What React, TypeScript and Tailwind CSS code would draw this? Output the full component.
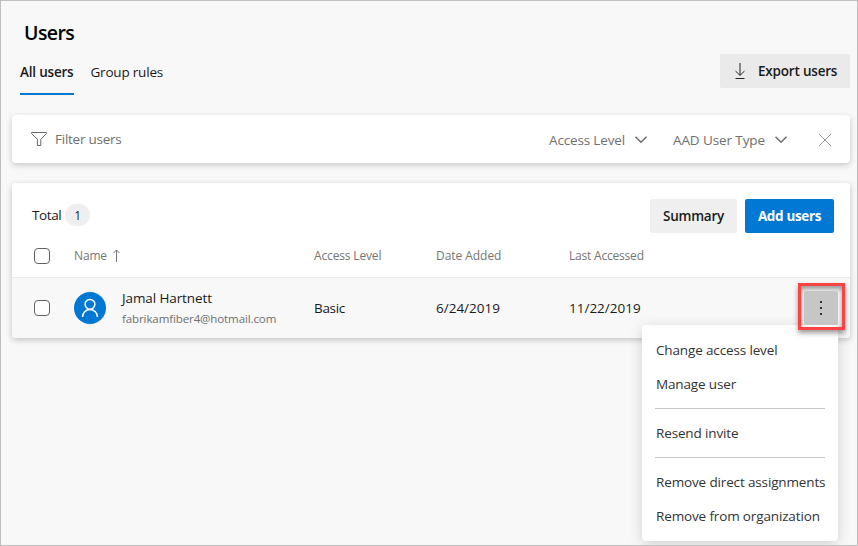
import type { ReactNode } from "react";

function Checkbox() {
  return <span className="block size-4 rounded-[4px] border border-[#616161] bg-white" />;
}

function Chevron() {
  return (
    <svg className="h-4 w-4" viewBox="0 0 16 16" fill="none" stroke="#6b6b6b" strokeWidth="1.5">
      <path d="M2.5 5.8 8 11.2l5.5-5.4" />
    </svg>
  );
}

function MenuItem({ children }: { children: ReactNode }) {
  return <div className="flex h-[34px] items-center pl-[14px] tracking-[-0.14px] text-[#333]">{children}</div>;
}

function Divider() {
  return <div className="mx-[13px] my-[7px] h-px bg-[#c8c8c8]" />;
}

export default function App() {
  return (
    <div className="relative h-[546px] w-[858px] overflow-hidden border border-[#bebebe] bg-[#f8f8f8] font-['Open_Sans','Noto_Sans',sans-serif] text-[13.5px] leading-5 whitespace-nowrap text-[#1a1a1a]">
      <div className="flex h-[53px] items-center pt-[10px] pl-[23px]">
        <h1 className="text-[19.5px] font-semibold tracking-[-0.6px] text-black">Users</h1>
      </div>
      <div className="flex h-[61px] justify-between pr-[7px] pl-[19px]">
        <div className="flex gap-[17px]">
          <div className="h-[41px] w-[54px] border-b-2 border-[#0078d4] pt-[8px] font-semibold tracking-[-0.2px]">All users</div>
          <div className="-ml-[0.5px] pt-[8px] tracking-[-0.2px]">Group rules</div>
        </div>
        <button className="flex h-[34px] w-[130px] items-center rounded-[2px] bg-[#eaeaea] pl-[13px] font-semibold">
          <svg className="mr-[11px] h-[16px] w-[14px]" viewBox="0 0 14 16" fill="none" stroke="#222">
            <path d="M7 0v12M2.5 8 7 12.4 11.5 8M2.5 15.5h9" />
          </svg>
          <span className="tracking-[-0.2px]">Export users</span>
        </button>
      </div>

      <div className="mr-[7px] ml-[11px] flex h-12 items-center rounded-[4px] bg-white pr-[17px] pl-[18px] text-[#6f6f6f] shadow-[0_2px_6px_rgba(0,0,0,0.2)]">
        <svg className="mr-[7px] h-[16px] w-[18px]" viewBox="0 0 18 16" fill="none" stroke="#666">
          <path d="M1.5 1.5h15v1l-5.7 5.8v6.2H7.4V8.3L1.5 2.5z" />
        </svg>
        <span className="flex-1 tracking-[-0.25px]">Filter users</span>
        <span className="w-[84px] pt-px tracking-[-0.15px]">Access Level</span>
        <Chevron />
        <span className="ml-[24px] w-[100px] pt-px tracking-[-0.1px]">AAD User Type</span>
        <Chevron />
        <svg className="mt-px ml-[28px] h-4 w-4" viewBox="0 0 16 16" stroke="#999">
          <path d="m2 2 12 12M14 2 2 14" />
        </svg>
      </div>

      <div className="mt-5 mr-[7px] ml-[11px] h-[155px] rounded-[4px] bg-white shadow-[0_2px_6px_rgba(0,0,0,0.22)]">
        <div className="flex h-[52px] items-center pt-[12px] pr-4 pl-5">
          <span className="mr-[4px] tracking-[-0.4px]">Total</span>
          <span className="flex h-[22px] w-[25px] items-center justify-center rounded-full bg-[#efefef] pt-px text-[12px]">1</span>
          <button className="mt-[2px] ml-auto h-[34px] w-[87px] rounded-[2px] bg-[#efefef] font-semibold tracking-[-0.25px]">Summary</button>
          <button className="mt-[2px] ml-2 h-[34px] w-[89px] rounded-[2px] bg-[#0078d4] font-bold tracking-[-0.35px] text-white">Add users</button>
        </div>
        <div className="flex h-[43px] items-center border-b border-[#e8e8e8] pl-[22px] text-[12px] tracking-[-0.15px] text-[#757575]">
          <div className="w-10"><Checkbox /></div>
          <div className="flex w-[240px] items-center">
            <span className="w-[37px]">Name</span>
            <svg className="-mt-[2px] h-[13px] w-[11px]" viewBox="0 0 11 13" fill="none" stroke="#757575">
              <path d="M5.5 13V1M2.5 4 5.5 1l3 3" />
            </svg>
          </div>
          <div className="w-[122px]">Access Level</div>
          <div className="w-[133px] tracking-[-0.05px]">Date Added</div>
          <div className="tracking-[-0.2px]">Last Accessed</div>
        </div>
        <div className="flex h-[60px] items-center rounded-b-[4px] bg-[#f8f8f8] pl-[22px]">
          <div className="w-10"><Checkbox /></div>
          <div className="flex w-[240px] items-center">
            <svg className="mr-4 size-8" viewBox="0 0 32 32" fill="none" stroke="white" strokeWidth="1.5">
              <circle cx="16" cy="16" r="16" fill="#0078d4" stroke="none" />
              <circle cx="16" cy="12.3" r="4.9" />
              <path d="M8.5 25a7.5 7.5 0 0 1 15 0" />
            </svg>
            <div>
              <div className="tracking-[-0.1px]">Jamal Hartnett</div>
              <div className="pt-px text-[11.5px] tracking-[-0.1px] text-[#6f6f6f]">fabrikamfiber4@hotmail.com</div>
            </div>
          </div>
          <div className="w-[122px] tracking-[-0.3px]">Basic</div>
          <div className="w-[133px]">6/24/2019</div>
          <div>11/22/2019</div>
        </div>
      </div>

      <div className="absolute top-[324px] left-[641px] h-[216px] w-[196px] rounded-[4px] bg-white py-2 shadow-[0_3px_14px_rgba(0,0,0,0.16)]">
        <MenuItem>Change access level</MenuItem>
        <MenuItem>Manage user</MenuItem>
        <Divider />
        <MenuItem>Resend invite</MenuItem>
        <Divider />
        <MenuItem>Remove direct assignments</MenuItem>
        <MenuItem>Remove from organization</MenuItem>
      </div>
      <div className="absolute top-[282px] left-[797px] flex size-[47px] items-end border-[3px] border-[#fc4343] pb-[2px] pl-[3px] shadow-[0_3px_5px_rgba(0,0,0,0.4),inset_0_3px_5px_rgba(0,0,0,0.4)]">
        <button className="flex size-[34px] flex-col items-center justify-center gap-1 rounded-[2px] bg-[#c6c6c6]">
          <span className="size-[2px] bg-[#333]" />
          <span className="size-[2px] bg-[#333]" />
          <span className="size-[2px] bg-[#333]" />
        </button>
      </div>
    </div>
  );
}
